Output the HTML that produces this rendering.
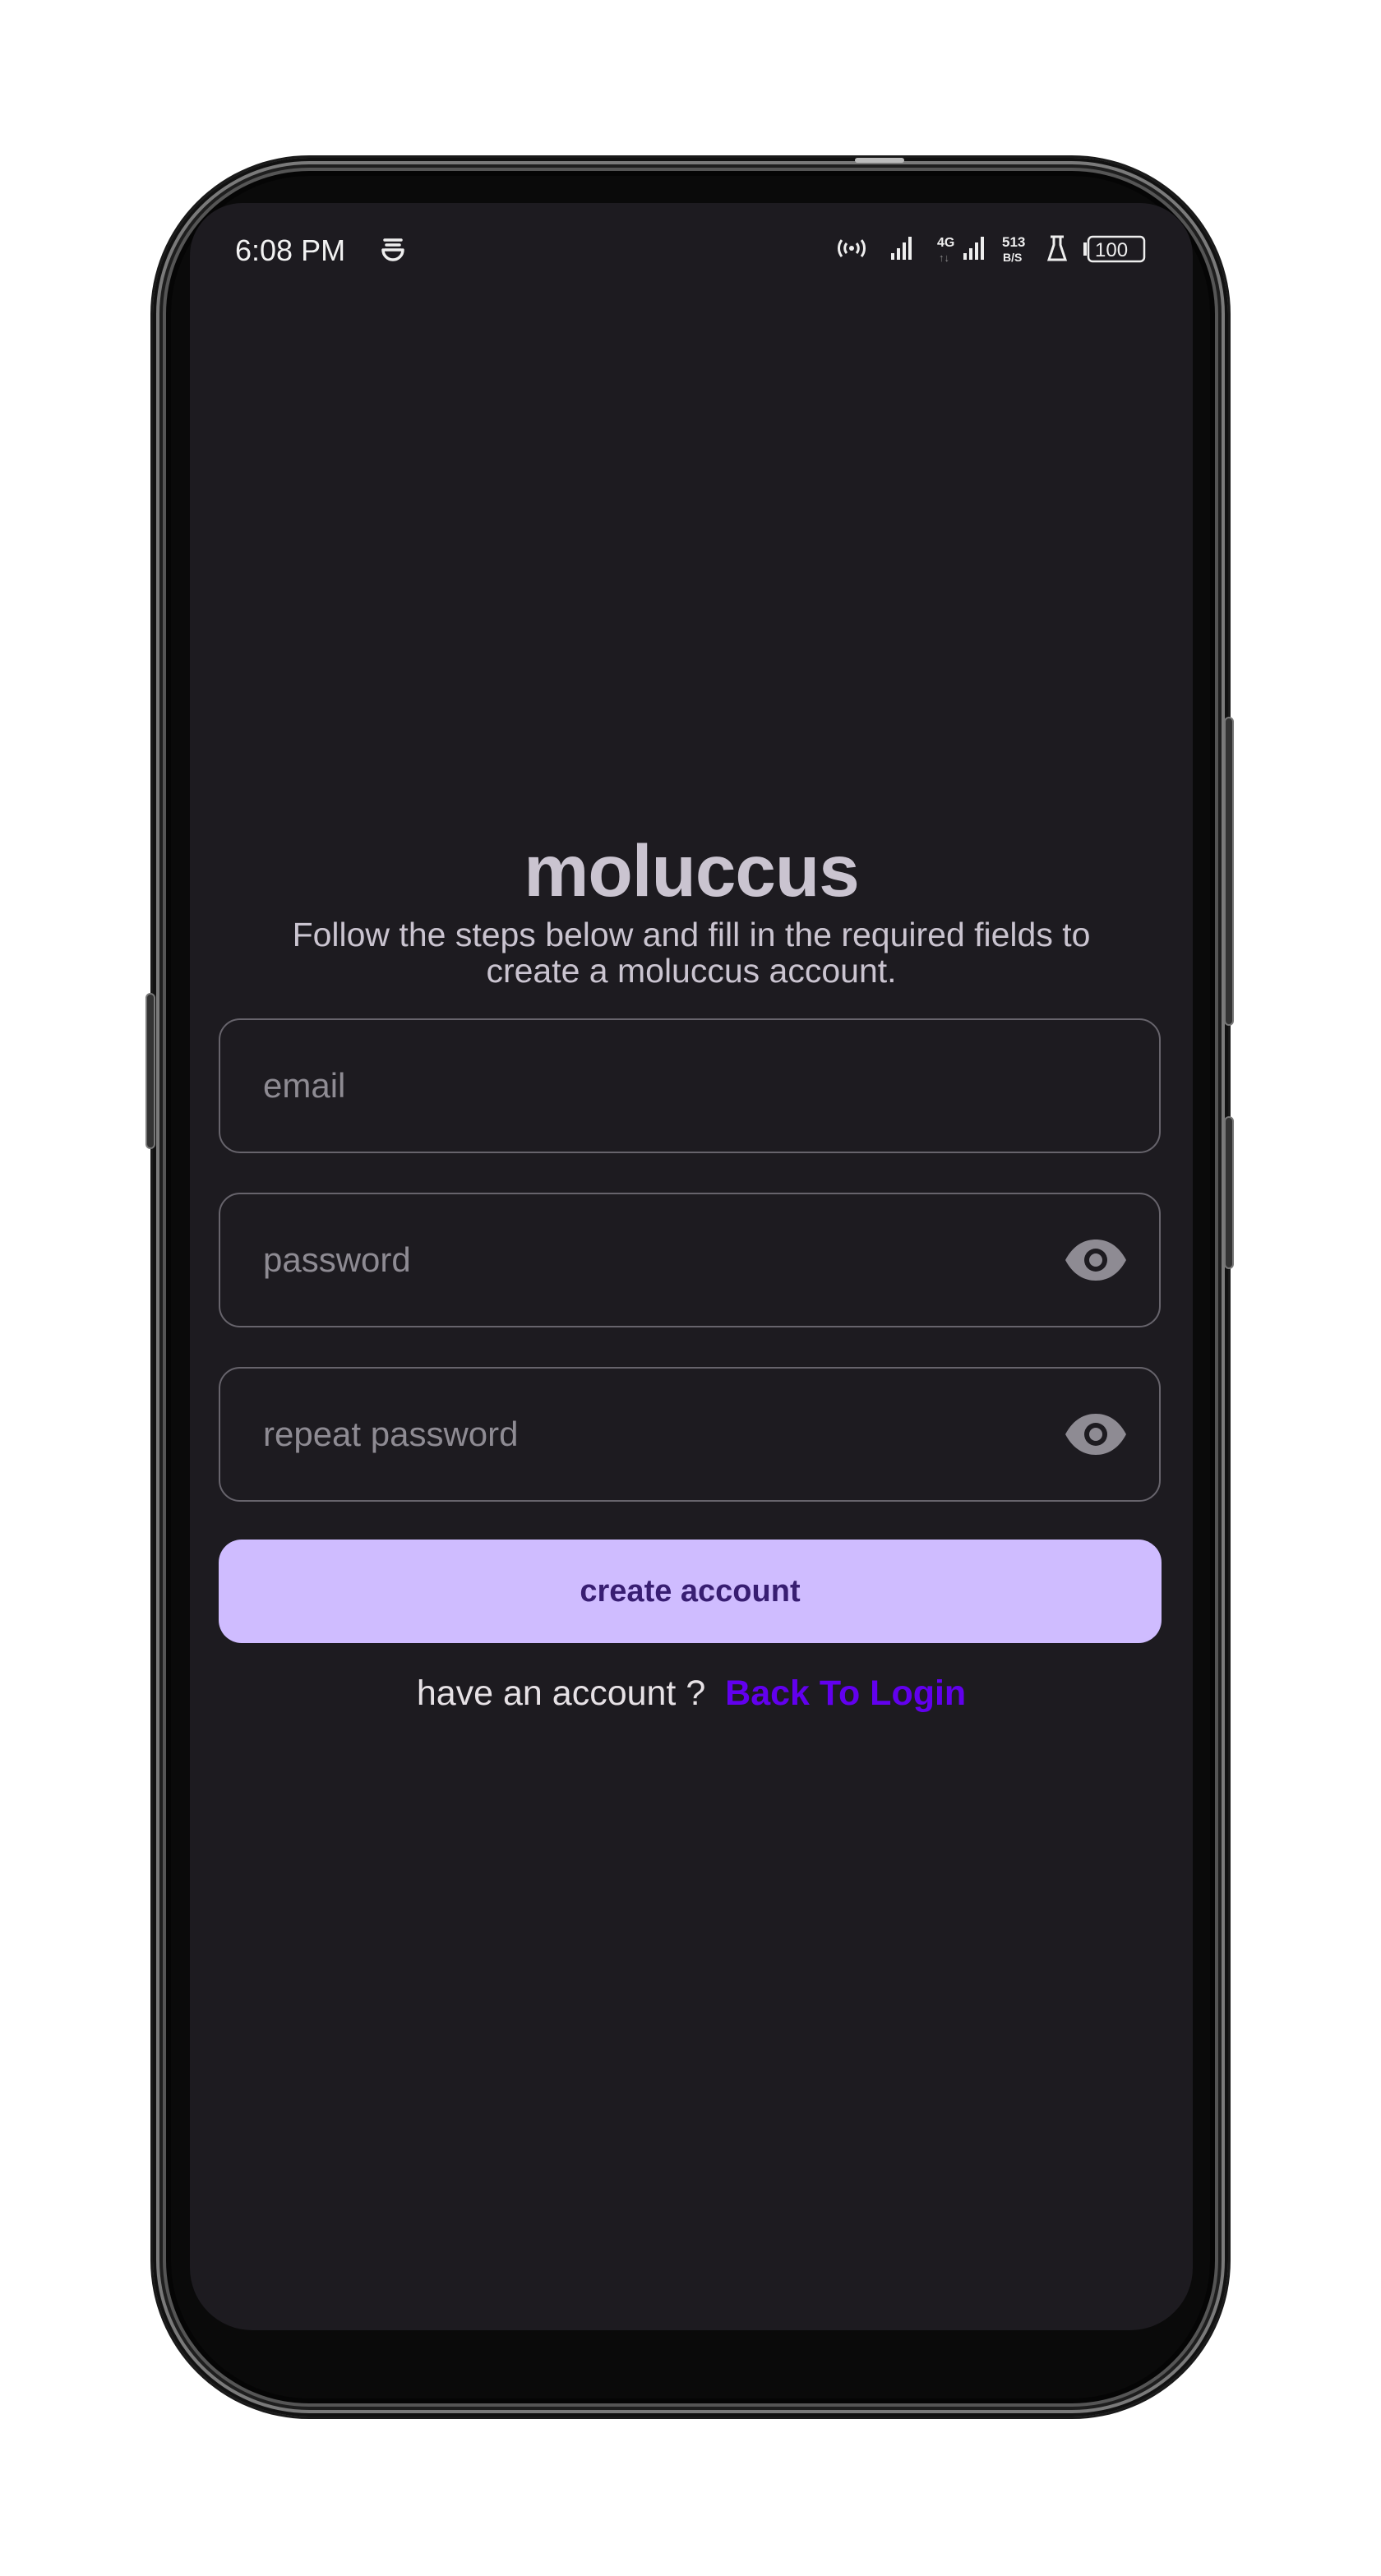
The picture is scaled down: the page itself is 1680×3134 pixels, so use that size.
<!DOCTYPE html>
<html><head><meta charset="utf-8"><style>
*{margin:0;padding:0;box-sizing:border-box}
body{width:1680px;height:3134px;background:#fff;position:relative;overflow:hidden;font-family:"Liberation Sans",Arial,sans-serif}
.abs{position:absolute}
.phone{left:186px;top:192px;width:1308px;height:2748px;border-radius:190px;background:#0a0a0a;box-shadow:0 0 0 3px #1a1a1a,inset 0 0 0 4px #111,inset 0 0 0 8px #7a7a7a,inset 0 0 0 12px #1e1e1e,inset 0 0 0 16px #555,inset 0 0 0 22px #050505}
.screen{left:231px;top:247px;width:1220px;height:2588px;background:#1d1b20;border-radius:64px 64px 76px 76px}
.btn{background:#333;border:2px solid #777;border-radius:6px}
.field{left:266px;width:1146px;height:164px;border:2.5px solid #67646c;border-radius:26px}
.ph{position:absolute;left:52px;top:50%;transform:translateY(-50%);font-size:42px;color:#8e8b93}
.eye{position:absolute;right:38px;top:50%;transform:translateY(-50%)}
.st{color:#f2f2f2;font-size:36px}
</style></head><body>
<div class="abs phone"></div>
<div class="abs btn" style="left:1489px;top:872px;width:12px;height:376px"></div>
<div class="abs btn" style="left:1489px;top:1358px;width:12px;height:186px"></div>
<div class="abs btn" style="left:177px;top:1208px;width:12px;height:190px"></div>
<div class="abs" style="left:1040px;top:192px;width:60px;height:6px;background:#bbb;border-radius:3px"></div>
<div class="abs screen"></div>

<div class="abs st" style="left:286px;top:284px">6:08 PM</div>
<svg class="abs" style="left:462px;top:286px" width="32" height="36" viewBox="0 0 32 36"><path d="M6 6h20M8 12h16M4 18a12 12 0 0 0 24 0M6 18h20" stroke="#eee" stroke-width="3.5" fill="none" stroke-linecap="round"/></svg>
<svg class="abs" style="left:1016px;top:282px" width="380" height="44" viewBox="0 0 380 44">
<g fill="none" stroke="#eee" stroke-width="3"><path d="M8 10a16 16 0 0 0 0 20M14 14a9 9 0 0 0 0 12M32 10a16 16 0 0 1 0 20M26 14a9 9 0 0 1 0 12"/></g><circle cx="20" cy="20" r="3" fill="#eee"/>
<g fill="#eee"><rect x="68" y="26" width="4" height="8"/><rect x="75" y="20" width="4" height="14"/><rect x="82" y="13" width="4" height="21"/><rect x="89" y="6" width="4" height="28"/>
<rect x="156" y="26" width="4" height="8"/><rect x="163" y="20" width="4" height="14"/><rect x="170" y="13" width="4" height="21"/><rect x="177" y="6" width="4" height="28"/></g>
<text x="124" y="18" font-size="16" font-weight="bold" fill="#eee" font-family="Liberation Sans">4G</text>
<text x="126" y="36" font-size="13" fill="#888" font-family="Liberation Sans">↑↓</text>
<text x="203" y="18" font-size="17" font-weight="bold" fill="#eee" font-family="Liberation Sans">513</text>
<text x="204" y="36" font-size="14" font-weight="bold" fill="#eee" font-family="Liberation Sans">B/S</text>
<path d="M262 6h16M266 6v10l-6 18h20l-6-18V6" fill="none" stroke="#eee" stroke-width="3"/>
<rect x="302" y="13" width="4" height="16" fill="#eee"/>
<rect x="308" y="6" width="68" height="30" rx="5" fill="none" stroke="#eee" stroke-width="2.5"/>
<text x="316" y="30" font-size="24" fill="#eee" font-family="Liberation Sans">100</text>
</svg>

<div class="abs" style="left:231px;width:1220px;top:1008px;text-align:center;font-size:89px;font-weight:bold;color:#cac4d0;letter-spacing:-1px">moluccus</div>
<div class="abs" style="left:231px;width:1220px;top:1115px;text-align:center;font-size:41px;line-height:44px;color:#cac4d0">Follow the steps below and fill in the required fields to<br>create a moluccus account.</div>

<div class="abs field" style="top:1239px"><span class="ph">email</span></div>
<div class="abs field" style="top:1451px"><span class="ph">password</span>
<svg class="eye" width="78" height="54" viewBox="0 0 78 54"><path d="M2 27C12 8 26 2 39 2s27 6 37 25C66 46 52 52 39 52S12 46 2 27z" fill="#8e8b93"/><circle cx="39" cy="27" r="14" fill="#1d1b20"/><circle cx="39" cy="27" r="8" fill="#8e8b93"/></svg></div>
<div class="abs field" style="top:1663px"><span class="ph">repeat password</span>
<svg class="eye" width="78" height="54" viewBox="0 0 78 54"><path d="M2 27C12 8 26 2 39 2s27 6 37 25C66 46 52 52 39 52S12 46 2 27z" fill="#8e8b93"/><circle cx="39" cy="27" r="14" fill="#1d1b20"/><circle cx="39" cy="27" r="8" fill="#8e8b93"/></svg></div>

<div class="abs" style="left:266px;top:1873px;width:1147px;height:126px;border-radius:28px;background:#cfbcff;color:#381e72;font-size:38px;font-weight:bold;text-align:center;line-height:126px">create account</div>

<div class="abs" style="left:231px;width:1220px;top:2036px;text-align:center;font-size:43px;color:#e6e1e5">have an account ?&nbsp; <span style="color:#6200ee;font-weight:bold">Back To Login</span></div>
</body></html>
